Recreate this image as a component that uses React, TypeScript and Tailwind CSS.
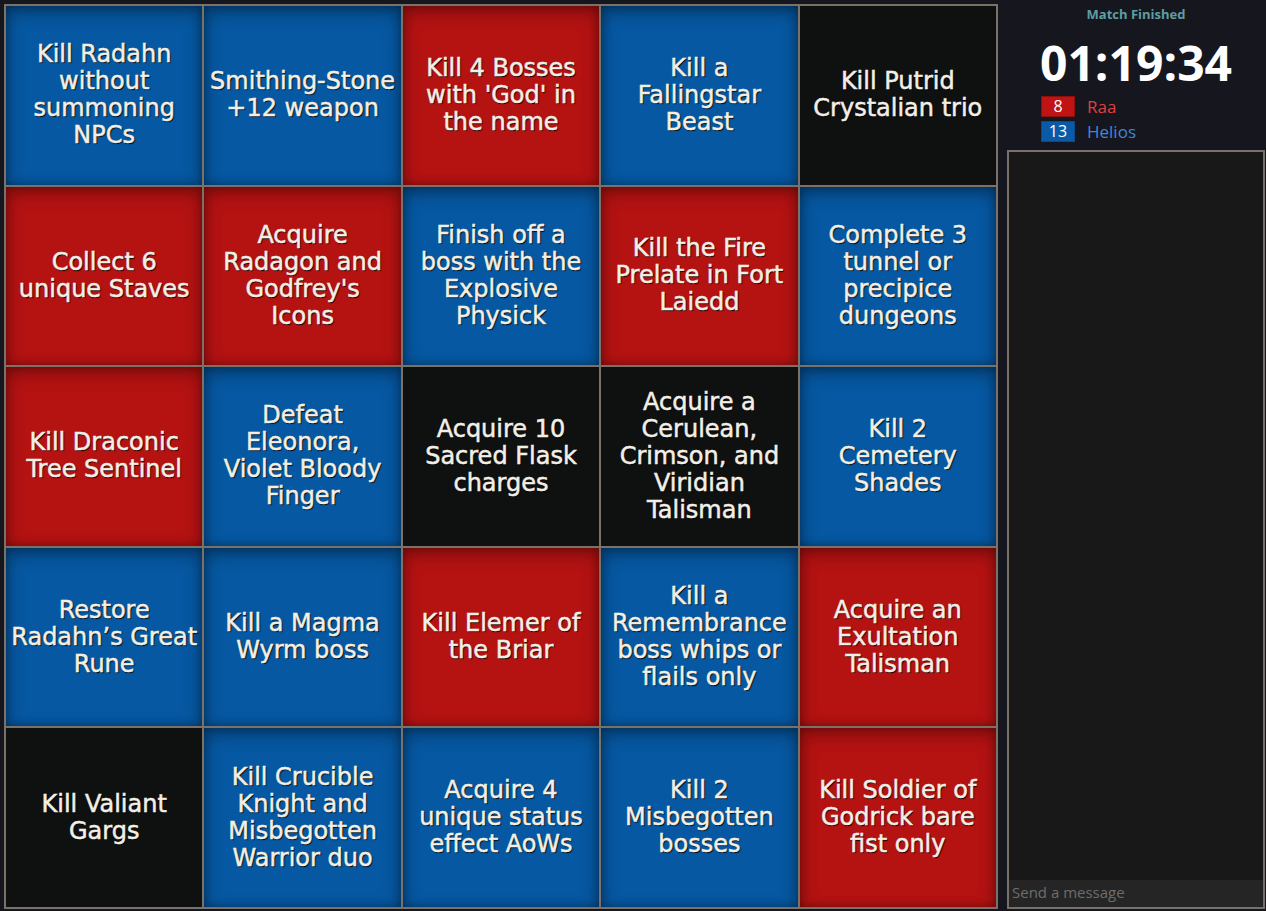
import React from 'react';

type Team = 'red' | 'blue' | 'none';

const goals: { lines: string[]; team: Team }[] = [
  { lines: ['Kill Radahn', 'without', 'summoning', 'NPCs'], team: 'blue' },
  { lines: ['Smithing-Stone', '+12 weapon'], team: 'blue' },
  { lines: ['Kill 4 Bosses', "with 'God' in", 'the name'], team: 'red' },
  { lines: ['Kill a', 'Fallingstar', 'Beast'], team: 'blue' },
  { lines: ['Kill Putrid', 'Crystalian trio'], team: 'none' },
  { lines: ['Collect 6', 'unique Staves'], team: 'red' },
  { lines: ['Acquire', 'Radagon and', "Godfrey's", 'Icons'], team: 'red' },
  { lines: ['Finish off a', 'boss with the', 'Explosive', 'Physick'], team: 'blue' },
  { lines: ['Kill the Fire', 'Prelate in Fort', 'Laiedd'], team: 'red' },
  { lines: ['Complete 3', 'tunnel or', 'precipice', 'dungeons'], team: 'blue' },
  { lines: ['Kill Draconic', 'Tree Sentinel'], team: 'red' },
  { lines: ['Defeat', 'Eleonora,', 'Violet Bloody', 'Finger'], team: 'blue' },
  { lines: ['Acquire 10', 'Sacred Flask', 'charges'], team: 'none' },
  { lines: ['Acquire a', 'Cerulean,', 'Crimson, and', 'Viridian', 'Talisman'], team: 'none' },
  { lines: ['Kill 2', 'Cemetery', 'Shades'], team: 'blue' },
  { lines: ['Restore', 'Radahn\u2019s Great', 'Rune'], team: 'blue' },
  { lines: ['Kill a Magma', 'Wyrm boss'], team: 'blue' },
  { lines: ['Kill Elemer of', 'the Briar'], team: 'red' },
  { lines: ['Kill a', 'Remembrance', 'boss whips or', 'flails only'], team: 'blue' },
  { lines: ['Acquire an', 'Exultation', 'Talisman'], team: 'red' },
  { lines: ['Kill Valiant', 'Gargs'], team: 'none' },
  { lines: ['Kill Crucible', 'Knight and', 'Misbegotten', 'Warrior duo'], team: 'blue' },
  { lines: ['Acquire 4', 'unique status', 'effect AoWs'], team: 'blue' },
  { lines: ['Kill 2', 'Misbegotten', 'bosses'], team: 'blue' },
  { lines: ['Kill Soldier of', 'Godrick bare', 'fist only'], team: 'red' },
];

const tileClass: Record<Team, string> = {
  blue: 'bg-[#0658a2] shadow-[inset_0_6px_18px_rgba(0,0,0,0.35),inset_0_0_10px_rgba(0,0,0,0.3)]',
  red: 'bg-[#b51212] shadow-[inset_0_6px_18px_rgba(0,0,0,0.3),inset_0_0_10px_rgba(0,0,0,0.3)]',
  none: 'bg-[#0f1111]',
};

const App = () => {
  return (
    <div className="flex w-[1266px] h-[911px] bg-[#16161f] overflow-hidden">
      <div className="ml-[4px] mt-[4px] w-[994px] h-[905px] grid grid-cols-5 grid-rows-5 gap-[2px] p-[2px] bg-[#7a7268]">
        {goals.map((g, i) => (
          <div
            key={i}
            className={`${tileClass[g.team]} flex items-center justify-center text-center cursor-pointer`}
          >
            <div className="font-['DejaVu_Sans',sans-serif] text-[24px] leading-[27px] text-[#f3efe6] whitespace-nowrap [-webkit-text-stroke:0.5px_#f3efe6] [text-shadow:1px_1px_1px_rgba(0,0,0,0.95)]">
              {g.lines.map((l, j) => (
                <div key={j}>{l}</div>
              ))}
            </div>
          </div>
        ))}
      </div>

      <div className="flex-1 flex flex-col font-['Open_Sans',sans-serif] pl-[9px] pr-[1px]">
        <div className="h-[146px] flex flex-col items-center pt-[5px]">
          <div className="text-[13px] font-bold text-[#5f9ea0] leading-[18px]">Match Finished</div>
          <div className="text-[48px] font-bold text-white leading-[60px] mt-[10px]">01:19:34</div>
          <div className="self-start ml-[34px] mt-[3px] flex flex-col gap-[4px]">
            <div className="flex items-center gap-[12px]">
              <span className="w-[34px] h-[21px] bg-[#c01313] border border-[#8e0d0d] text-white text-[16px] leading-[19px] text-center">8</span>
              <span className="text-[#e0403c] text-[17px] leading-[21px] font-medium">Raa</span>
            </div>
            <div className="flex items-center gap-[12px]">
              <span className="w-[34px] h-[21px] bg-[#0b5aa8] border border-[#094a8a] text-white text-[16px] leading-[19px] text-center">13</span>
              <span className="text-[#3f88d6] text-[17px] leading-[21px] font-medium">Helios</span>
            </div>
          </div>
        </div>
        <div className="mt-[4px] h-[759px] flex flex-col border-2 border-[#78716a] bg-[#181818]">
          <div className="flex-1" />
          <input
            className="h-[27px] bg-[#252525] px-[3px] pb-[3px] text-[15px] text-[#aaa] placeholder:text-[#6d6d6d] outline-none font-['Open_Sans',sans-serif]"
            placeholder="Send a message"
          />
        </div>
      </div>
    </div>
  );
};

export default App;
